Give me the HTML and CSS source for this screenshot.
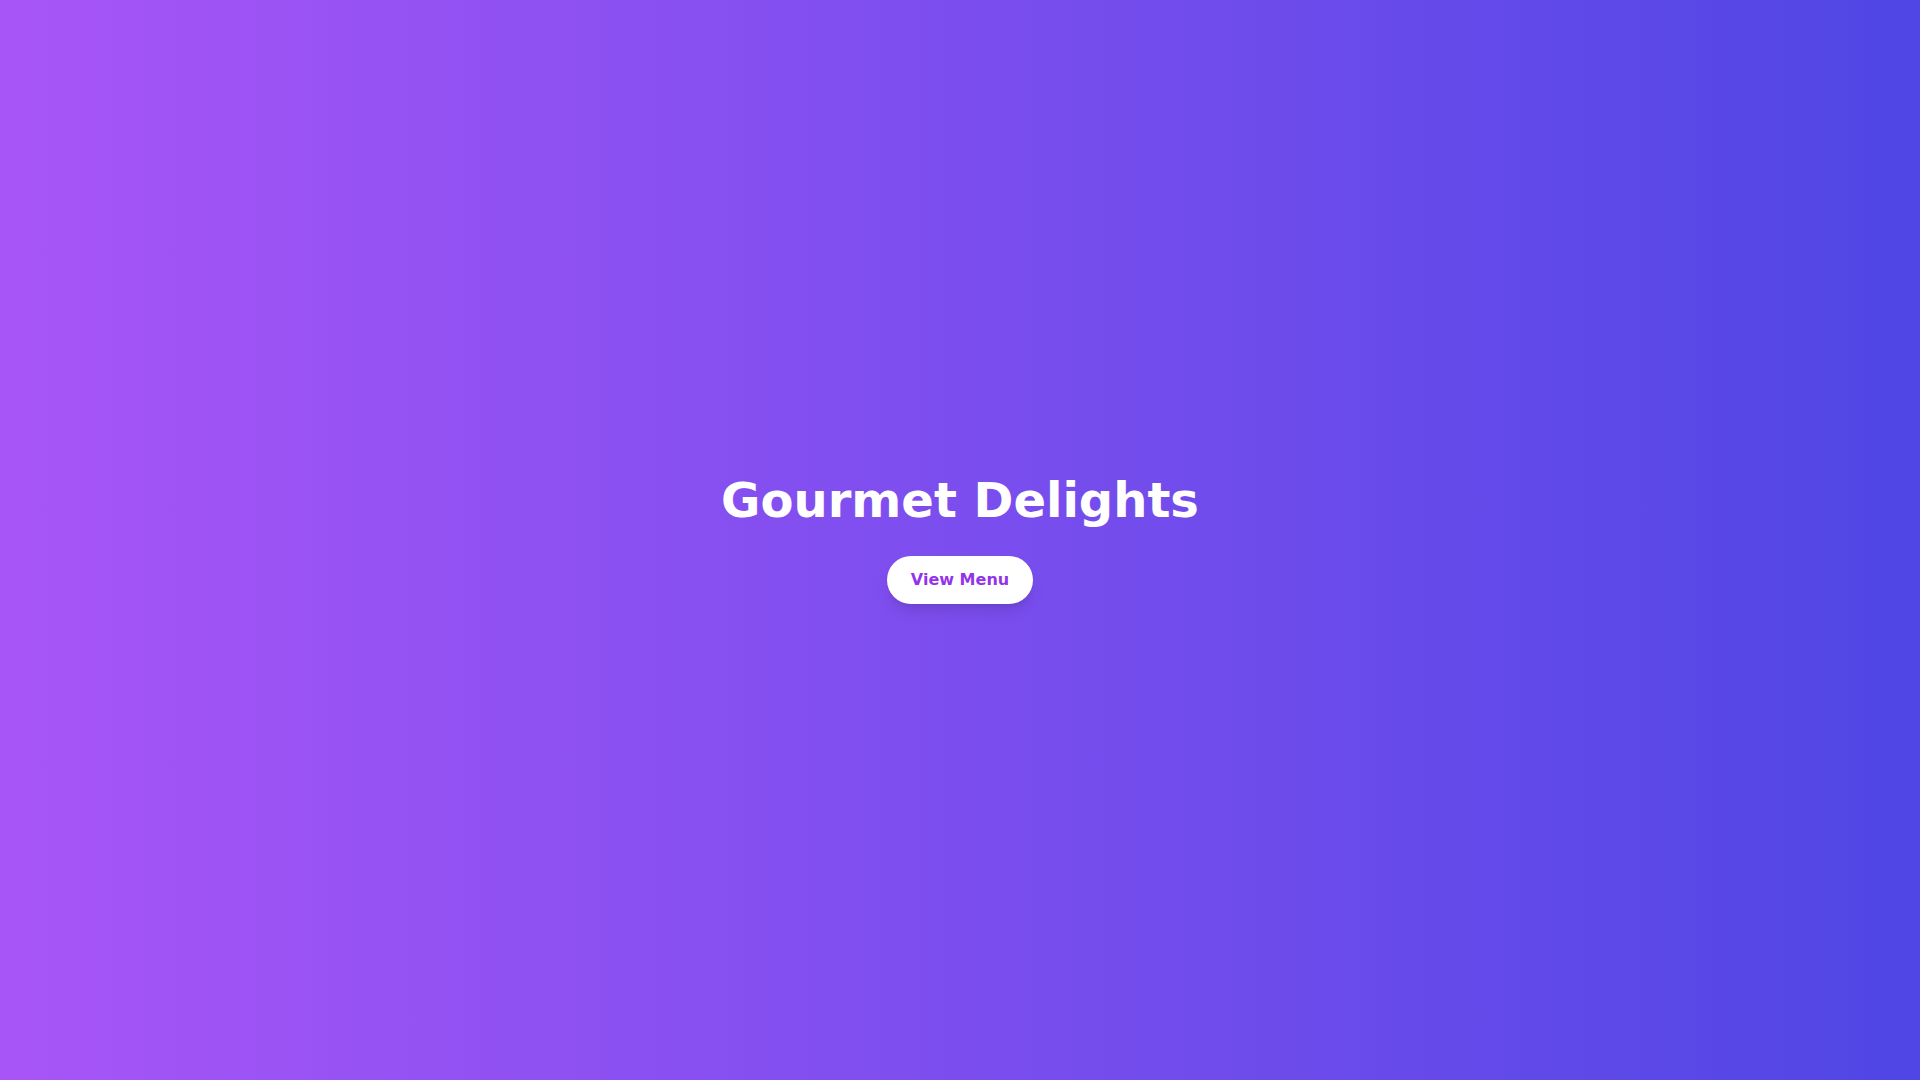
FILE: index.html
```html
<!DOCTYPE html>
<html>
<head>
<meta charset="utf-8">
<link rel="stylesheet" href="styles.css">
</head>
<body>
<main class="hero">
  <h1 class="title">Gourmet Delights</h1>
  <button class="cta">View Menu</button>
</main>
</body>
</html>
```
FILE: styles.css
```css
* { box-sizing: border-box; }
html, body { margin: 0; padding: 0; }
body {
  font-family: "DejaVu Sans", sans-serif;
}
.hero {
  width: 100%;
  height: 100vh;
  background: linear-gradient(to right, #a855f7, #4f46e5);
  display: flex;
  flex-direction: column;
  align-items: center;
  justify-content: center;
}
.title {
  margin: 0 0 32px 0;
  font-size: 48px;
  line-height: 1;
  font-weight: 700;
  color: #ffffff;
}
.cta {
  font-family: "DejaVu Sans", sans-serif;
  font-size: 16px;
  line-height: 24px;
  font-weight: 700;
  color: #9333ea;
  background: #ffffff;
  border: none;
  border-radius: 9999px;
  padding: 12px 24px;
  box-shadow: 0 10px 15px -3px rgba(0,0,0,0.1), 0 4px 6px -4px rgba(0,0,0,0.1);
  cursor: pointer;
}
```
